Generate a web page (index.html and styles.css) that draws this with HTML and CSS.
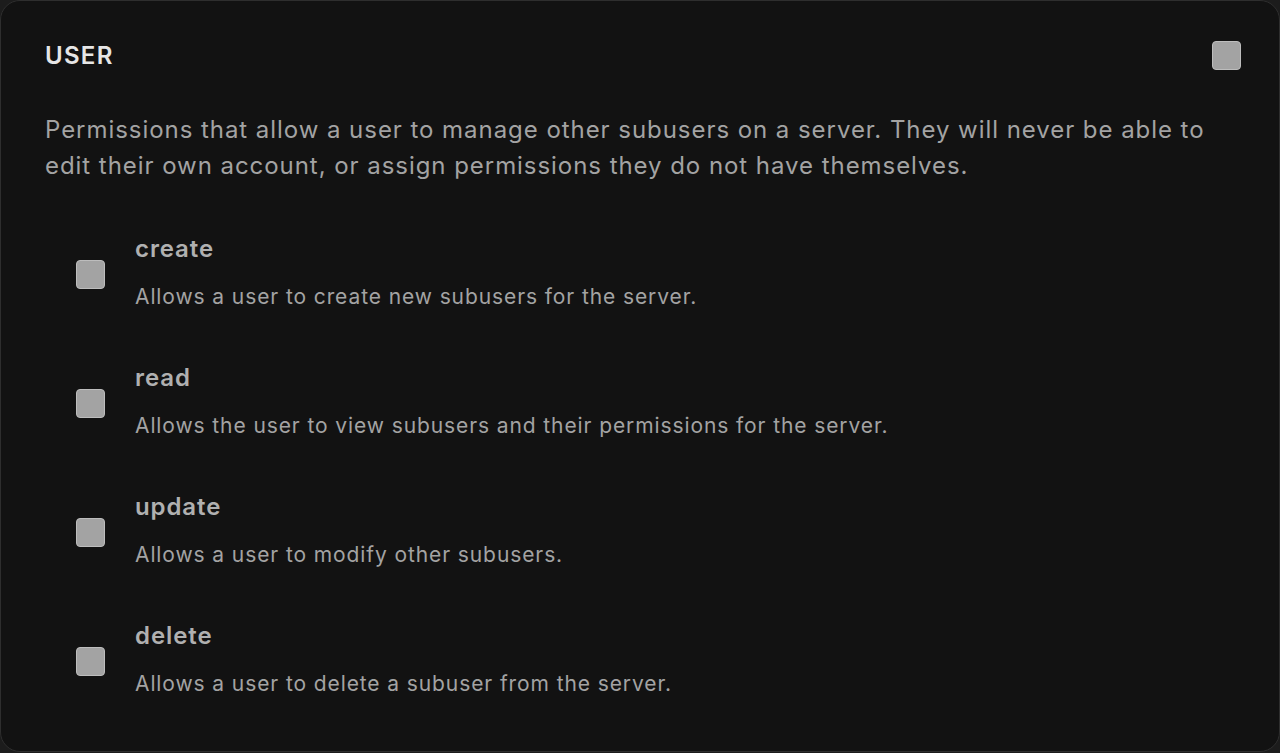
FILE: index.html
```html
<!DOCTYPE html>
<html lang="en">
<head>
<meta charset="utf-8">
<title>User permissions</title>
<link rel="stylesheet" href="styles.css">
</head>
<body>
<section class="card">
  <header class="card-head">
    <h2 class="title">USER</h2>
    <span class="checkbox"></span>
  </header>
  <p class="intro">Permissions that allow a user to manage other subusers on a server. They will never be able to edit their own account, or assign permissions they do not have themselves.</p>
  <ul class="perms">
    <li class="perm">
      <span class="checkbox"></span>
      <div class="perm-text">
        <div class="perm-name">create</div>
        <div class="perm-desc">Allows a user to create new subusers for the server.</div>
      </div>
    </li>
    <li class="perm">
      <span class="checkbox"></span>
      <div class="perm-text">
        <div class="perm-name">read</div>
        <div class="perm-desc">Allows the user to view subusers and their permissions for the server.</div>
      </div>
    </li>
    <li class="perm">
      <span class="checkbox"></span>
      <div class="perm-text">
        <div class="perm-name">update</div>
        <div class="perm-desc">Allows a user to modify other subusers.</div>
      </div>
    </li>
    <li class="perm">
      <span class="checkbox"></span>
      <div class="perm-text">
        <div class="perm-name">delete</div>
        <div class="perm-desc">Allows a user to delete a subuser from the server.</div>
      </div>
    </li>
  </ul>
</section>
</body>
</html>
```
FILE: styles.css
```css
* { box-sizing: border-box; }
html, body { margin: 0; padding: 0; }
body {
  background: #1c1c1c;
  font-family: Inter, "Noto Sans", "Liberation Sans", sans-serif;
  width: 1280px;
  height: 753px;
  overflow: hidden;
}
.card {
  height: 752px;
  background: #121212;
  border: 1px solid #2e2e2e;
  border-radius: 20px;
  padding: 37px 38px 0 44px;
}
.card-head {
  display: flex;
  justify-content: space-between;
  align-items: center;
  height: 36px;
}
.title {
  margin: 0;
  font-size: 24px;
  line-height: 36px;
  font-weight: 600;
  color: #e6e6e6;
  letter-spacing: 1.3px;
}
.checkbox {
  display: block;
  width: 29px;
  height: 29px;
  flex: none;
  background: #a3a3a3;
  border: 1px solid #bdbdbd;
  border-radius: 4px;
}
.card-head .checkbox { margin-top: -2px; }
.intro {
  margin: 38px 0 0;
  font-size: 24px;
  line-height: 36px;
  color: #a3a3a3;
  letter-spacing: 0.95px;
}
.perms {
  list-style: none;
  margin: 49px 0 0;
  padding: 0 0 0 31px;
  display: flex;
  flex-direction: column;
  gap: 51px;
}
.perm {
  display: flex;
  align-items: center;
  gap: 30px;
}
.perm .checkbox { margin-top: 4px; }
.perm-text {
  display: flex;
  flex-direction: column;
  gap: 18px;
}
.perm-name {
  font-size: 24px;
  line-height: 32px;
  font-weight: 600;
  color: #b0b0b0;
  letter-spacing: 0.9px;
}
.perm-desc {
  font-size: 21px;
  line-height: 28px;
  color: #a3a3a3;
  letter-spacing: 0.9px;
}
```
